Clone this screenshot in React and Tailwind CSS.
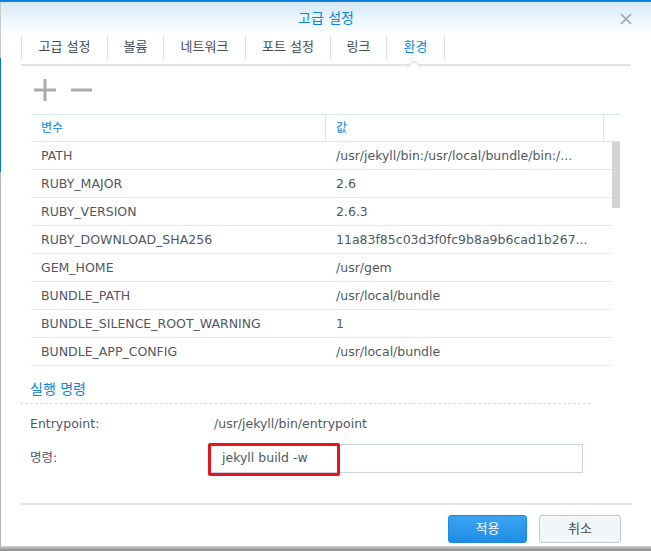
import React from 'react';

const KR = "font-['DejaVu_Sans','Noto_Sans_CJK_KR',sans-serif]";

const tabs = [
  { label: '고급 설정', w: 'w-[86px]' },
  { label: '볼륨', w: 'w-[56px]' },
  { label: '네트워크', w: 'w-[82px]' },
  { label: '포트 설정', w: 'w-[85px]' },
  { label: '링크', w: 'w-[56px]' },
  { label: '환경', w: 'w-[58px]', active: true },
];

const envVars = [
  ['PATH', '/usr/jekyll/bin:/usr/local/bundle/bin:/...'],
  ['RUBY_MAJOR', '2.6'],
  ['RUBY_VERSION', '2.6.3'],
  ['RUBY_DOWNLOAD_SHA256', '11a83f85c03d3f0fc9b8a9b6cad1b267...'],
  ['GEM_HOME', '/usr/gem'],
  ['BUNDLE_PATH', '/usr/local/bundle'],
  ['BUNDLE_SILENCE_ROOT_WARNING', '1'],
  ['BUNDLE_APP_CONFIG', '/usr/local/bundle'],
];

export default function App() {
  return (
    <div className={`w-[651px] h-[551px] overflow-hidden bg-[#8d8d8d] flex flex-col ${KR}`}>
      <div className="h-[2px] bg-[#0b7fd9]" />
      <div className="flex h-[544px]">
        {/* backdrop sliver on the left */}
        <div className="w-[1px] flex flex-col">
          <div className="h-[56px] bg-[#c9c9c9]" />
          <div className="h-[114px] bg-[#0a78d2]" />
          <div className="flex-1 bg-[#b5b5b5]" />
        </div>

        <div className="flex-1 bg-white flex flex-col">
          {/* title bar */}
          <div className="relative h-[33px] bg-gradient-to-b from-[#d6e9f8] to-white flex items-center justify-center">
            <span className="text-[14px] text-[#0a86e0]">고급 설정</span>
            <svg className="absolute right-[19px] top-[11px]" width="12" height="12" viewBox="0 0 12 12">
              <path d="M1 1 L11 11 M11 1 L1 11" stroke="#9ba2a9" strokeWidth="1.6" />
            </svg>
          </div>

          {/* tabs */}
          <div className="relative mx-[20px] h-[31px] border-b-2 border-[#e3e3e3]">
            <div className="flex h-[24px] border-l border-[#d6e1eb]">
              {tabs.map(t => (
                <div
                  key={t.label}
                  className={`${t.w} h-full border-r border-[#d6e1eb] flex items-center justify-center text-[13px] ${t.active ? 'text-[#0a86e0]' : 'text-[#414b55]'}`}
                >
                  {t.label}
                </div>
              ))}
            </div>
            <svg className="absolute left-[386px] top-[25px]" width="14" height="8" viewBox="0 0 14 8">
              <path d="M0 7.5 L7 1 L14 7.5" fill="white" stroke="#d5d5d5" strokeWidth="1" />
            </svg>
          </div>

          {/* add / remove */}
          <div className="flex items-center gap-[15px] ml-[33px] h-[48px]">
            <svg width="22" height="22" viewBox="0 0 22 22">
              <path d="M11 0 V22 M0 11 H22" stroke="#a8adb2" strokeWidth="3" />
            </svg>
            <svg width="21" height="22" viewBox="0 0 21 22">
              <path d="M0 11 H21" stroke="#a8adb2" strokeWidth="3" />
            </svg>
          </div>

          {/* env table */}
          <div className="ml-[30px] w-[589px]">
            <div className="flex h-[28px] border-y border-[#d9e5f1] text-[12px] text-[#0a86e0]">
              <div className="w-[295px] pl-[10px] flex items-center border-r border-[#d9e5f1]">변수</div>
              <div className="w-[278px] pl-[10px] flex items-center border-r border-[#d9e5f1]">값</div>
              <div className="flex-1" />
            </div>
            <div className="flex">
              <div className="w-[581px]">
                {envVars.map(([k, v]) => (
                  <div key={k} className="flex h-[28px] pt-[1px] border-b border-[#e6e9ed] text-[12.5px] text-[#4f5862]">
                    <div className="w-[295px] pl-[10px] flex items-center">{k}</div>
                    <div className="flex-1 pl-[10px] flex items-center whitespace-nowrap">{v}</div>
                  </div>
                ))}
              </div>
              <div className="w-[8px]">
                <div className="h-[66px] bg-[#d2d4d6]" />
              </div>
            </div>
          </div>

          {/* command section */}
          <div className="ml-[19px] w-[571px] mt-[10px] h-[28px] border-b border-dashed border-[#cfdceb] flex items-center pl-[10px] text-[14px] text-[#0a86e0]">
            실행 명령
          </div>
          <div className="ml-[29px] mt-[10px] flex items-center h-[20px] text-[12.5px] text-[#4f5862]">
            <div className="w-[184px]">Entrypoint:</div>
            <div>/usr/jekyll/bin/entrypoint</div>
          </div>
          <div className="ml-[29px] mt-[9px] flex items-center h-[30px] text-[12.5px] text-[#4f5862]">
            <div className="w-[178px]">명령:</div>
            <div className="relative w-[375px] h-[29px] border border-[#c9d3de] flex items-center pl-[13px]">
              jekyll build -w
              <div className="absolute left-[-1px] top-[-2px] w-[132px] h-[33px] border-[3px] border-[#e8141e] rounded-[2px]" />
            </div>
          </div>

          {/* footer */}
          <div className="mx-[19px] mt-[30px] border-t-2 border-[#e3e3e3]" />
          <div className="flex justify-end gap-[12px] mr-[30px] mt-[10px]">
            <button className="w-[79px] h-[28px] rounded-[3px] border border-[#1a8ae0] bg-gradient-to-b from-[#3aa4f3] to-[#1e8ce6] text-white text-[13px]">
              적용
            </button>
            <button className="w-[82px] h-[28px] rounded-[3px] border border-[#c5ced8] bg-[#f3f6f9] text-[#414b55] text-[13px]">
              취소
            </button>
          </div>
        </div>
      </div>
      <div className="flex-1 bg-gradient-to-b from-[#d0d0d0] to-[#8a8a8a]" />
    </div>
  );
}
